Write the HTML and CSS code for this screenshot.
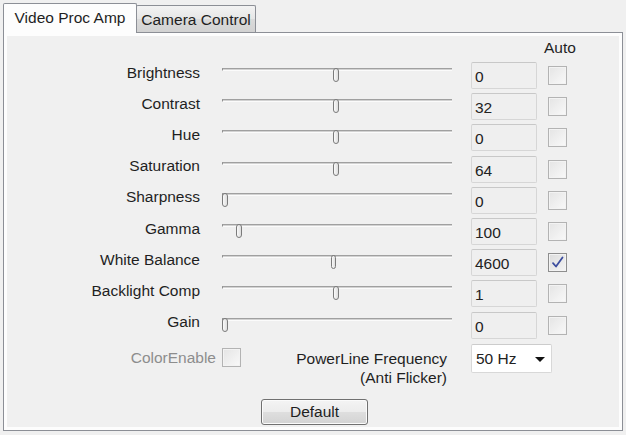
FILE: index.html
```html
<!DOCTYPE html>
<html>
<head>
<meta charset="utf-8">
<link rel="stylesheet" href="styles.css">
</head>
<body>
<div class="window">
  <div class="tabs">
    <div class="tab tab-active">Video Proc Amp</div>
    <div class="tab tab-inactive">Camera Control</div>
  </div>
  <div class="panel">
    <div class="page">
      <div class="grid">
        <div class="head-spacer"></div>
        <div class="auto-head">Auto</div>

        <div class="label">Brightness</div>
        <div class="slider-cell"><div class="slider"><div class="track"></div><div class="thumb" style="left:111px"></div></div></div>
        <div class="val-cell"><div class="val">0</div></div>
        <div class="chk-cell"><div class="chk"></div></div>

        <div class="label">Contrast</div>
        <div class="slider-cell"><div class="slider"><div class="track"></div><div class="thumb" style="left:111px"></div></div></div>
        <div class="val-cell"><div class="val">32</div></div>
        <div class="chk-cell"><div class="chk"></div></div>

        <div class="label">Hue</div>
        <div class="slider-cell"><div class="slider"><div class="track"></div><div class="thumb" style="left:111px"></div></div></div>
        <div class="val-cell"><div class="val">0</div></div>
        <div class="chk-cell"><div class="chk"></div></div>

        <div class="label">Saturation</div>
        <div class="slider-cell"><div class="slider"><div class="track"></div><div class="thumb" style="left:111px"></div></div></div>
        <div class="val-cell"><div class="val">64</div></div>
        <div class="chk-cell"><div class="chk"></div></div>

        <div class="label">Sharpness</div>
        <div class="slider-cell"><div class="slider"><div class="track"></div><div class="thumb" style="left:0px"></div></div></div>
        <div class="val-cell"><div class="val">0</div></div>
        <div class="chk-cell"><div class="chk"></div></div>

        <div class="label">Gamma</div>
        <div class="slider-cell"><div class="slider"><div class="track"></div><div class="thumb" style="left:14px"></div></div></div>
        <div class="val-cell"><div class="val">100</div></div>
        <div class="chk-cell"><div class="chk"></div></div>

        <div class="label">White Balance</div>
        <div class="slider-cell"><div class="slider"><div class="track"></div><div class="thumb thumb-thin" style="left:109px"></div></div></div>
        <div class="val-cell"><div class="val">4600</div></div>
        <div class="chk-cell"><div class="chk chk-on"><svg class="tick" viewBox="0 0 13 13" width="13" height="13"><path d="M2 7.2 L5 10.5 L11.5 1.5" fill="none" stroke="#3b4c9e" stroke-width="1.8" stroke-linecap="round" stroke-linejoin="round"/></svg></div></div>

        <div class="label">Backlight Comp</div>
        <div class="slider-cell"><div class="slider"><div class="track"></div><div class="thumb" style="left:111px"></div></div></div>
        <div class="val-cell"><div class="val">1</div></div>
        <div class="chk-cell"><div class="chk"></div></div>

        <div class="label">Gain</div>
        <div class="slider-cell"><div class="slider"><div class="track"></div><div class="thumb" style="left:0px"></div></div></div>
        <div class="val-cell"><div class="val">0</div></div>
        <div class="chk-cell"><div class="chk"></div></div>
      </div>

      <div class="bottom">
        <div class="color-group">
          <span class="disabled">ColorEnable</span>
          <div class="chk"></div>
        </div>
        <div class="powerline">PowerLine Frequency<br>(Anti Flicker)</div>
        <div class="select"><span>50 Hz</span><span class="arrow"></span></div>
      </div>

      <div class="actions">
        <div class="btn">Default</div>
      </div>
    </div>
  </div>
</div>
</body>
</html>
```

FILE: styles.css
```css
html, body {
  margin: 0;
  padding: 0;
  background: #f0f0f0;
}
body {
  font-family: "Liberation Sans", Arial, sans-serif;
  font-size: 15.5px;
  color: #1f1f1f;
}
.window {
  padding: 3px 0 0 3px;
  width: 620px;
}
.tabs {
  display: flex;
  align-items: flex-end;
  height: 29px;
}
.tab {
  box-sizing: border-box;
  border: 1px solid #8c8f96;
  border-bottom: none;
  display: flex;
  justify-content: center;
  align-items: center;
  white-space: nowrap;
}
.tab-active {
  width: 134px;
  height: 30px;
  margin-bottom: -1px;
  background: #fdfdfd;
  position: relative;
  z-index: 2;
  border-radius: 2px 2px 0 0;
  padding-bottom: 1px;
}
.tab-inactive {
  width: 120px;
  height: 27px;
  margin-left: -1px;
  background: linear-gradient(#f3f3f3, #e6e6e6 50%, #dadada 52%, #d2d2d2);
  padding-top: 2px;
  border-radius: 2px 2px 0 0;
}
.panel {
  box-sizing: border-box;
  width: 620px;
  height: 399px;
  border: 1px solid #8c8f96;
  background: #fdfdfd;
  padding: 3px;
  position: relative;
  z-index: 1;
}
.page {
  height: 100%;
  background: #f0f0f0;
  display: flex;
  flex-direction: column;
}
.grid {
  display: grid;
  grid-template-columns: 193px 252px 85px 31px;
  grid-template-rows: 24px repeat(9, 31.2px);
}
.head-spacer {
  grid-column: span 3;
}
.auto-head {
  align-self: center;
  padding-left: 7px;
  white-space: nowrap;
}
.label {
  justify-self: end;
  align-self: center;
  margin-bottom: 6px;
  white-space: nowrap;
}
.slider-cell {
  padding-left: 22px;
}
.slider {
  position: relative;
  width: 230px;
  height: 14px;
  margin-top: 8px;
}
.track {
  box-sizing: border-box;
  margin-top: 4px;
  height: 3px;
  border-top: 1px solid #a0a0a0;
  border-left: 1px solid #909090;
  border-bottom: 1px solid #fbfbfb;
  background: #d2d2d2;
}
.thumb {
  position: absolute;
  top: 0;
  box-sizing: border-box;
  width: 6px;
  height: 14px;
  border: 1px solid #7b7b7b;
  border-radius: 3px;
  background: linear-gradient(90deg, #fafafa, #dedede);
}
.thumb-thin {
  width: 5px;
}
.val-cell {
  padding-left: 19px;
  align-self: center;
}
.val {
  box-sizing: border-box;
  width: 66px;
  height: 27px;
  border: 1px solid #d6d6d6;
  border-top-color: #c8c8c8;
  border-radius: 2px;
  background: #efefef;
  padding: 2px 0 0 3px;
  line-height: 23px;
  color: #222;
}
.chk-cell {
  padding-left: 11px;
  align-self: center;
}
.chk {
  box-sizing: border-box;
  width: 19px;
  height: 19px;
  border: 1px solid #b3b3b3;
  background: linear-gradient(135deg, #e4e4e4, #f9f9f9);
  box-shadow: inset 0 0 0 1px #f3f3f3;
  display: flex;
  align-items: center;
  justify-content: center;
}
.chk-on {
  border-color: #8e8e8e;
  background: linear-gradient(135deg, #dcdcdc, #f4f4f4);
}
.tick {
  display: block;
}
.bottom {
  display: flex;
  align-items: flex-start;
  height: 58px;
}
.color-group {
  width: 234px;
  display: flex;
  justify-content: flex-end;
  align-items: center;
  gap: 6px;
  margin-top: 7px;
}
.disabled {
  color: #8d8d8d;
  margin-top: 1px;
}
.powerline {
  width: 206px;
  text-align: right;
  line-height: 19px;
  margin-top: 8px;
  white-space: nowrap;
}
.select {
  box-sizing: border-box;
  margin-left: 24px;
  margin-top: 3px;
  width: 81px;
  height: 29px;
  background: #fff;
  border: 1px solid #d8d8d8;
  border-top-color: #cccccc;
  border-radius: 2px;
  display: flex;
  align-items: center;
  justify-content: space-between;
  padding: 1px 6px 0 4px;
  color: #222;
}
.arrow {
  width: 0;
  height: 0;
  border-left: 5px solid transparent;
  border-right: 5px solid transparent;
  border-top: 5px solid #111;
  margin-top: 1px;
}
.actions {
  display: flex;
  justify-content: center;
}
.btn {
  box-sizing: border-box;
  width: 107px;
  height: 26px;
  margin-left: 3px;
  border: 1px solid #707070;
  border-radius: 3px;
  background: linear-gradient(#f4f4f4, #ececec 50%, #dedede 52%, #d3d3d3);
  box-shadow: inset 0 0 0 1px #fbfbfb;
  display: flex;
  align-items: center;
  justify-content: center;
  color: #1e1e1e;
}
```
